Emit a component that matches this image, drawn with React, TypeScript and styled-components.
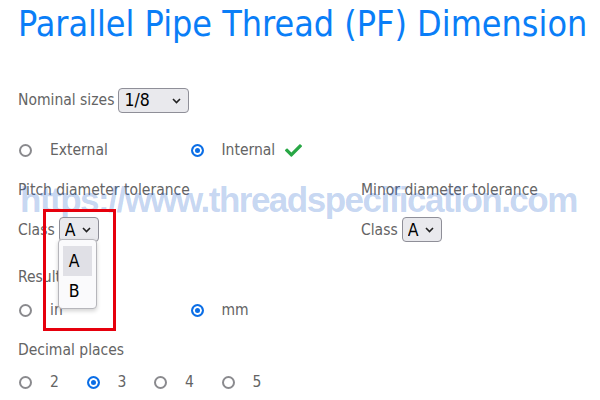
import * as React from 'react'
import styled, { createGlobalStyle } from 'styled-components'
import { FaCheck } from 'react-icons/fa'

const GlobalStyle = createGlobalStyle`
  html, body {
    margin: 0;
    padding: 0;
    background: #fff;
  }
  body {
    font-family: 'DejaVu Sans Condensed', 'DejaVu Sans', sans-serif;
    color: #646464;
  }
`

const Page = styled.main`
  position: relative;
  width: 600px;
  height: 400px;
  padding: 0 18px;
  box-sizing: border-box;
  overflow: hidden;
`

const Watermark = styled.div`
  position: absolute;
  left: 20px;
  top: 182px;
  font-family: 'Liberation Sans', Arial, sans-serif;
  font-weight: bold;
  font-size: 35px;
  line-height: 35px;
  letter-spacing: -1.5px;
  color: rgba(37, 99, 205, 0.27);
  white-space: nowrap;
  pointer-events: none;
`

const Title = styled.h1`
  margin: 0;
  padding-top: 2px;
  height: 46px;
  font-size: 35.6px;
  font-weight: normal;
  line-height: 44px;
  color: #0a7ef7;
  white-space: nowrap;
`

const Row = styled.div<{ $top: number; $height?: number }>`
  display: flex;
  align-items: center;
  margin-top: ${(p) => p.$top}px;
  height: ${(p) => p.$height ?? 20}px;
  font-size: 15.5px;
  white-space: nowrap;
`

const Columns = styled.div`
  display: grid;
  grid-template-columns: 343px 1fr;
`

const SelectWrap = styled.span`
  position: relative;
  display: inline-flex;
  margin-left: 4px;
`

const NativeSelect = styled.select<{ $width: number }>`
  appearance: none;
  width: ${(p) => p.$width}px;
  height: 25px;
  margin: 0;
  padding: 0 0 0 5px;
  border: 1px solid #8f8f98;
  border-radius: 4px;
  background: #e9e9ed;
  color: #000;
  font-family: 'DejaVu Sans Condensed', 'DejaVu Sans', sans-serif;
  font-size: 17.5px;
  outline: none;
`

const Chevron = styled.svg`
  position: absolute;
  right: 8px;
  top: 10px;
  pointer-events: none;
`

const Popup = styled.div`
  position: absolute;
  left: -1px;
  top: 22px;
  width: 39px;
  height: 70px;
  box-sizing: border-box;
  padding: 6px 4px;
  background: #fafafc;
  border: 1px solid #b6b6bb;
  border-radius: 4px;
  box-shadow: 0 2px 4px rgba(0, 0, 0, 0.18);
`

const PopupOption = styled.div<{ $active?: boolean }>`
  height: 30px;
  line-height: 30px;
  padding-left: 6px;
  font-size: 17.5px;
  color: #000;
  background: ${(p) => (p.$active ? '#e0e0e6' : 'transparent')};
`

const Highlight = styled.div`
  position: absolute;
  left: -16px;
  top: -8px;
  width: 73px;
  height: 122px;
  box-sizing: border-box;
  border: 3px solid #e6000d;
  pointer-events: none;
`

const RadioLabel = styled.label<{ $width: number }>`
  display: flex;
  align-items: center;
  width: ${(p) => p.$width}px;
`

const Radio = styled.input.attrs({ type: 'radio' })`
  appearance: none;
  width: 13px;
  height: 13px;
  margin: 0 18px 0 1px;
  border: 2px solid #8a8a8e;
  border-radius: 50%;
  box-sizing: border-box;
  background: #fff;

  &:checked {
    border-color: #0b6ee6;
    background: #0b6ee6;
    box-shadow: inset 0 0 0 2px #fff;
  }
`

const Tick = styled(FaCheck)`
  margin-left: 10px;
  color: #28a745;
`

const Select = ({
  value,
  options,
  width,
  open,
}: {
  value: string
  options: string[]
  width: number
  open?: boolean
}) => (
  <SelectWrap>
    <NativeSelect $width={width} defaultValue={value}>
      {options.map((o) => (
        <option key={o}>{o}</option>
      ))}
    </NativeSelect>
    <Chevron width="9" height="6" viewBox="0 0 9 6">
      <polyline points="1,1 4.5,4.5 8,1" fill="none" stroke="#222" strokeWidth="1.6" />
    </Chevron>
    {open && (
      <>
        <Popup>
          {options.map((o) => (
            <PopupOption key={o} $active={o === value}>
              {o}
            </PopupOption>
          ))}
        </Popup>
        <Highlight />
      </>
    )}
  </SelectWrap>
)

const RadioGroup = ({
  name,
  items,
  checked,
  width,
  tick,
}: {
  name: string
  items: string[]
  checked: string
  width: number
  tick?: string
}) => (
  <>
    {items.map((item) => (
      <RadioLabel key={item} $width={width}>
        <Radio name={name} defaultChecked={item === checked} />
        {item}
        {tick === item && <Tick size={17} />}
      </RadioLabel>
    ))}
  </>
)

export default function App() {
  return (
    <Page>
      <GlobalStyle />
      <Watermark>https://www.threadspecification.com</Watermark>
      <Title>Parallel Pipe Thread (PF) Dimension</Title>

      <Row $top={40} $height={24}>
        Nominal sizes
        <Select value="1/8" options={['1/8', '1/4', '3/8', '1/2']} width={71} />
      </Row>

      <Row $top={28}>
        <RadioGroup
          name="type"
          items={['External', 'Internal']}
          checked="Internal"
          width={171.5}
          tick="Internal"
        />
      </Row>

      <Columns>
        <div>
          <Row $top={20}>Pitch diameter tolerance</Row>
          <Row $top={17} $height={25}>
            Class
            <Select value="A" options={['A', 'B']} width={40} open />
          </Row>
        </div>
        <div>
          <Row $top={20}>Minor diameter tolerance</Row>
          <Row $top={17} $height={25}>
            Class
            <Select value="A" options={['A', 'B']} width={40} />
          </Row>
        </div>
      </Columns>

      <Row $top={25}>Result</Row>
      <Row $top={13}>
        <RadioGroup name="unit" items={['in', 'mm']} checked="mm" width={171.5} />
      </Row>

      <Row $top={20}>Decimal places</Row>
      <Row $top={12}>
        <RadioGroup name="dec" items={['2', '3', '4', '5']} checked="3" width={67.5} />
      </Row>
    </Page>
  )
}
